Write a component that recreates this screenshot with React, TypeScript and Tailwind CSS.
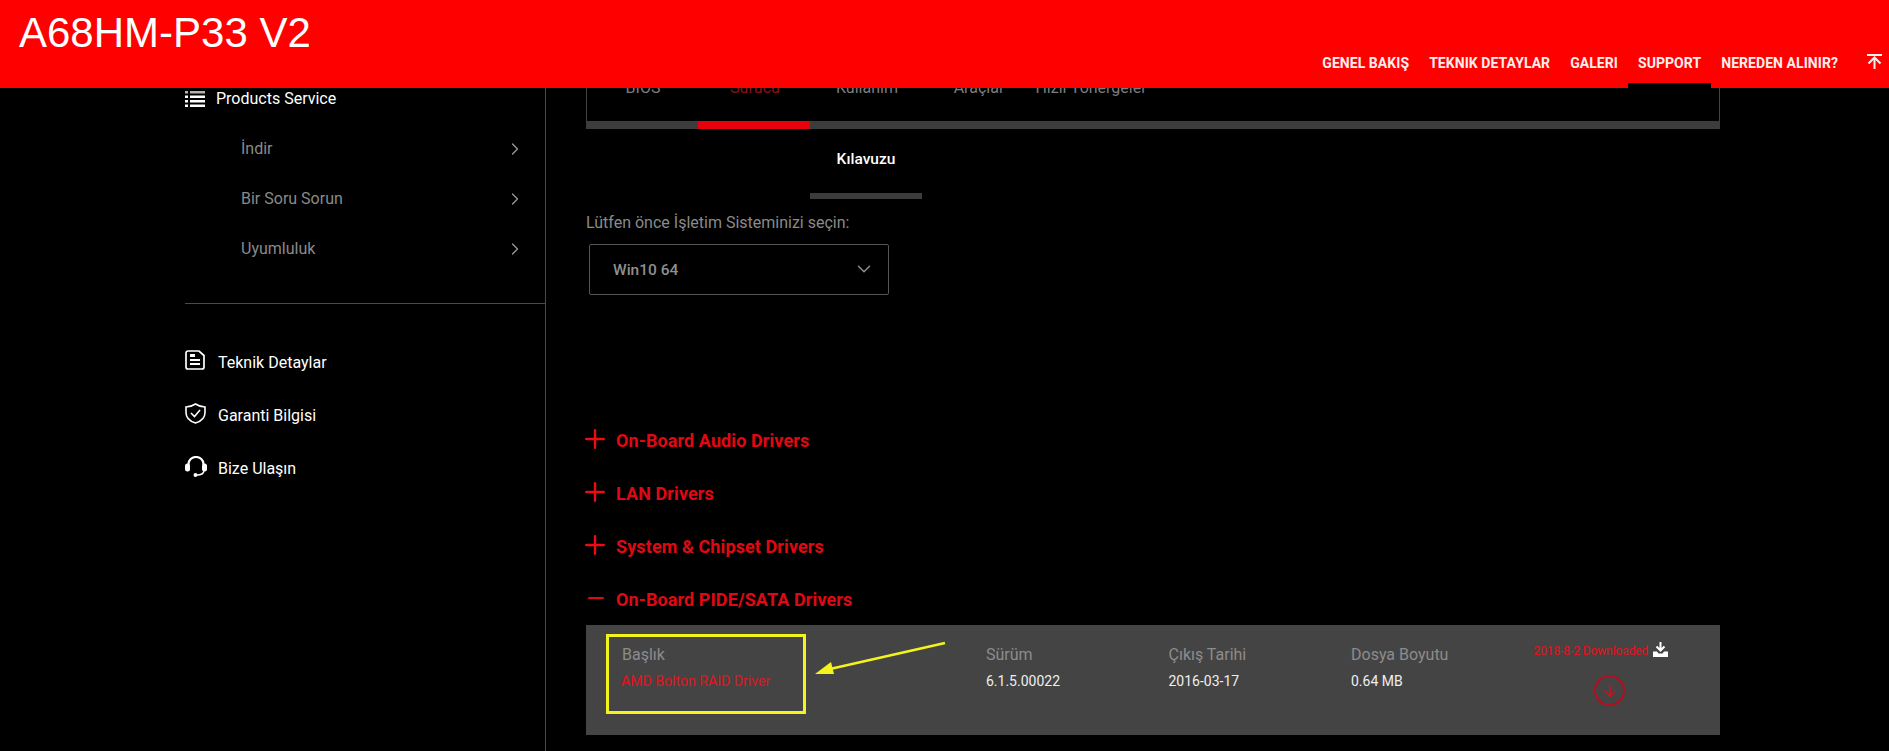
import React from "react";
import { ChevronRight, ChevronDown, ArrowDown, Plus, Minus } from "lucide-react";

const font = "font-['Roboto',sans-serif]";

const ListIcon = () => (
  <svg width="20" height="16" viewBox="0 0 20 16" fill="#fff">
    <rect x="0" y="0" width="3" height="2.5" fillOpacity="0.7" />
    <rect x="5" y="0" width="15" height="2.5" fillOpacity="0.7" />
    <rect x="0" y="4.5" width="3" height="2.5" />
    <rect x="5" y="4.5" width="15" height="2.5" />
    <rect x="0" y="9" width="3" height="2.5" />
    <rect x="5" y="9" width="15" height="2.5" />
    <rect x="0" y="13.5" width="3" height="2.5" />
    <rect x="5" y="13.5" width="15" height="2.5" />
  </svg>
);

const TopIcon = () => (
  <svg width="15" height="15" viewBox="0 0 15 15" fill="none" stroke="#ffeeee" strokeWidth="2">
    <path d="M0 1 H15" />
    <path d="M7.5 15 V4" />
    <path d="M1.5 9.5 L7.5 3.5 L13.5 9.5" />
  </svg>
);

const DocIcon = () => (
  <svg width="20" height="20" viewBox="0 0 20 20" fill="none" stroke="#fff" strokeWidth="1.7">
    <path d="M3 1 H14 L19 5.5 V17 a2 2 0 0 1 -2 2 H3 a2 2 0 0 1 -2 -2 V3 a2 2 0 0 1 2 -2 Z" />
    <path d="M5 5.5 H10" strokeWidth="3" />
    <path d="M5 10 H15 M5 14 H15" strokeWidth="1.8" />
  </svg>
);

const ShieldIcon = () => (
  <svg width="21" height="21" viewBox="0 0 21 21" fill="none" stroke="#fff" strokeWidth="1.6">
    <path d="M10.5 1 C7.5 3 4.5 3.8 1 4 V9.5 C1 15 5.5 18.5 10.5 20 C15.5 18.5 20 15 20 9.5 V4 C16.5 3.8 13.5 3 10.5 1 Z" />
    <path d="M6 10 L9.5 13.5 L15 7" />
  </svg>
);

const HeadsetIcon = () => (
  <svg width="22" height="21" viewBox="0 0 22 21" fill="none" stroke="#fff" strokeWidth="2.2">
    <path d="M3.5 9 V8 a7.5 7 0 0 1 15 0 V9" />
    <rect x="0" y="7.5" width="5" height="8" rx="2.5" fill="#fff" stroke="none" />
    <rect x="17" y="7.5" width="5" height="8" rx="2.5" fill="#fff" stroke="none" />
    <path d="M19 15 C18.5 17.5 16 19 12 19" strokeWidth="1.4" />
    <circle cx="10.5" cy="19" r="2" fill="#fff" stroke="none" />
  </svg>
);

const TrayIcon = () => (
  <svg width="15" height="15" viewBox="0 0 15 15" fill="none">
    <path d="M7.5 0 V8 M3.5 4.5 L7.5 8.5 L11.5 4.5" stroke="#fff" strokeWidth="2" />
    <path d="M0 9.5 H4 L5.5 11.5 H9.5 L11 9.5 H15 V15 H0 Z" fill="#fff" />
  </svg>
);

const sideItems = ["İndir", "Bir Soru Sorun", "Uyumluluk"];
const sideLinks = [
  { label: "Teknik Detaylar", icon: <DocIcon /> },
  { label: "Garanti Bilgisi", icon: <ShieldIcon /> },
  { label: "Bize Ulaşın", icon: <HeadsetIcon /> },
];
const nav = ["GENEL BAKIŞ", "TEKNIK DETAYLAR", "GALERI", "SUPPORT", "NEREDEN ALINIR?"];
const tabs = ["BIOS", "Sürücü", "Kullanım", "Araçlar", "Hızlı Yönergeler"];
const groups = ["On-Board Audio Drivers", "LAN Drivers", "System & Chipset Drivers"];
const cols = [
  { h: "Sürüm", v: "6.1.5.00022" },
  { h: "Çıkış Tarihi", v: "2016-03-17" },
  { h: "Dosya Boyutu", v: "0.64 MB" },
];

export default function App() {
  return (
    <div className={`${font} w-[1889px] h-[751px] overflow-hidden bg-black`}>
      <header className="relative z-10 h-[88px] bg-[#ff0000] flex items-start justify-between">
        <h1 className="font-['Liberation_Sans',sans-serif] text-[42px] leading-[48px] text-white pl-[19px] pt-[9px]">
          A68HM-P33 V2
        </h1>
        <nav className="flex h-[88px] items-start pr-[7px]">
          {nav.map((n) => (
            <div key={n} className={`relative h-[88px] px-[10px] pt-[54px] text-[14px] leading-[18px] font-bold tracking-[0.06px] text-[#ffeeee] ${n === "SUPPORT" ? "border-b-[5px] border-black" : ""}`}>
              {n}
            </div>
          ))}
          <div className="pl-[19px] pt-[54px]">
            <TopIcon />
          </div>
        </nav>
      </header>

      <div className="flex h-[663px]">
        <aside className="ml-[185px] w-[361px] border-r border-[#4a4a4a] shrink-0">
          <div className="flex items-center h-[22px] text-white text-[16px]">
            <ListIcon />
            <span className="ml-[11px]">Products Service</span>
          </div>
          <div className="mt-[14px]">
            {sideItems.map((s) => (
              <div key={s} className="flex items-center justify-between h-[50px] pl-[56px] pr-[20px] text-[16px] text-[#8a8a8a]">
                <span>{s}</span>
                <ChevronRight size={20} strokeWidth={1.5} className="text-[#9a9a9a]" />
              </div>
            ))}
          </div>
          <div className="mt-[29px] h-px bg-[#4a4a4a]" />
          <div className="mt-[32px]">
            {sideLinks.map((l) => (
              <div key={l.label} className="flex items-center h-[53px] text-white text-[16px]">
                <span className="w-[33px] flex -mt-[5px]">{l.icon}</span>
                <span>{l.label}</span>
              </div>
            ))}
          </div>
        </aside>

        <main className="ml-[40px] w-[1134px] shrink-0 -mt-[29px]">
          <div className="flex h-[70px] border-x border-[#444] relative">
            {tabs.map((t, i) => (
              <div key={t} className={`w-[112px] pt-[19px] text-center text-[16px] leading-[20px] ${i === 1 ? "text-[#8c1015]" : "text-[#7c7c7c]"}`}>
                {t}
              </div>
            ))}
            <div className="absolute inset-x-[-1px] bottom-0 h-[8px] bg-[#3c3c3c]">
              <div className="ml-[112px] w-[112px] h-full bg-[#e8000b]" />
            </div>
          </div>
          <div className="ml-[224px] w-[112px] h-[70px] flex flex-col items-center justify-between">
            <span className="mt-[20px] text-[15.5px] leading-[20px] text-white font-medium">Kılavuzu</span>
            <div className="w-full h-[6px] bg-[#3c3c3c]" />
          </div>

          <p className="mt-[14px] text-[16px] leading-[20px] text-[#8a8a8a]">Lütfen önce İşletim Sisteminizi seçin:</p>
          <div className="mt-[11px] ml-[3px] w-[300px] h-[51px] border border-[#555] rounded-[2px] flex items-center justify-between pl-[23px] pr-[13px] text-[15.5px] font-medium text-[#8f8f8f]">
            <span className="mt-[2px]">Win10 64</span>
            <ChevronDown size={22} strokeWidth={1.6} className="-mt-[2px]" />
          </div>

          <div className="mt-[119px]">
            {groups.map((g) => (
              <div key={g} className="flex items-center h-[53px] text-[#e00812] text-[18px] font-bold tracking-[0.1px]">
                <Plus size={30} strokeWidth={1.9} className="-ml-[6px] mr-[6px] -mt-[3px] text-[#f00a14]" />
                <span>{g}</span>
              </div>
            ))}
            <div className="flex items-center h-[53px] text-[#e00812] text-[18px] font-bold tracking-[0.1px]">
              <Minus size={24} strokeWidth={2} className="-ml-[2px] mr-[8px] -mt-[3px]" />
              <span>On-Board PIDE/SATA Drivers</span>
            </div>
          </div>

          <div className="relative -mt-px h-[110px] bg-[#444444] flex pl-[36px] pt-[20px]">
            <div className="w-[364px]">
              <div className="text-[16px] leading-[20px] text-[#8c8c8c]">Başlık</div>
              <div className="mt-[6px] text-[14.1px] leading-[20px] text-[#e0141e] -ml-[1px]">AMD Bolton RAID Driver</div>
            </div>
            {cols.map((c) => (
              <div key={c.h} className="w-[182.5px]">
                <div className="text-[16px] leading-[20px] text-[#8c8c8c]">{c.h}</div>
                <div className="mt-[6px] text-[14px] leading-[20px] text-[#eeeeee]">{c.v}</div>
              </div>
            ))}
            <div className="-mt-[2px] flex flex-col items-center">
              <div className="flex items-center">
                <span className="text-[12px] leading-[16px] tracking-[-0.1px] text-[#e0141e]">2018-8-2 Downloaded</span>
                <span className="ml-[5px] -mt-[3px]"><TrayIcon /></span>
              </div>
              <div className="mt-[16px] ml-[18px] w-[31px] h-[31px] rounded-full border-2 border-[#b01020] flex items-center justify-center text-[#d01020]">
                <ArrowDown size={18} strokeWidth={2} />
              </div>
            </div>

            <div className="absolute left-[20px] top-[9px] w-[200px] h-[80px] border-[3px] border-[#f4f41c]" />
            <svg className="absolute left-[228px] top-[16px]" width="135" height="36" viewBox="0 0 135 36">
              <path d="M131 2 L16 28" stroke="#f4f41c" strokeWidth="2.5" fill="none" />
              <path d="M1 33 L17 21 L20 33 Z" fill="#f4f41c" />
            </svg>
          </div>
        </main>
      </div>
    </div>
  );
}
